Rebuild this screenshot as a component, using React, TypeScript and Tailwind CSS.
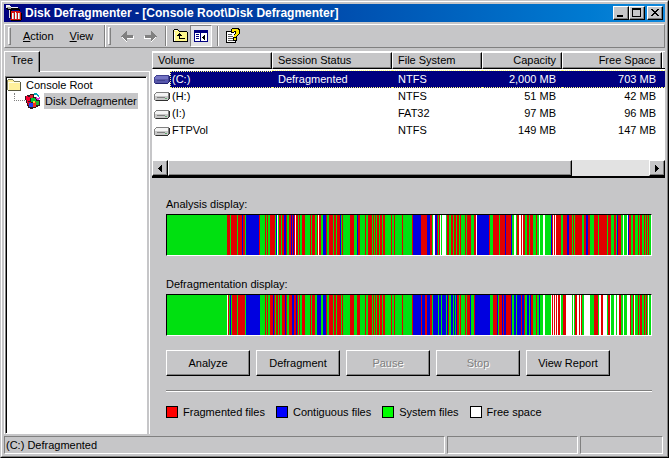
import type { ReactNode } from "react";

const ANALYSIS = [
  "60G 3R 1G 6R 1G 4R 1B 2R 1G 13B 1R 5G 1R 1G 1R 2G 5R 1G 1B 1W 1G 2R 1G 2R 2B 1R 2G 2R 1B 1R 1B 1R 1W 2R 1G 1R 2G 3R 5G 1R 1G 3R 2G 1R 1W 2R 2G 3B",
  "1R 2G 4R 1G 2R 1G 3R 1B 1G 1R 7G 4R 3G 1B 2R 5G 1R 2G 4R 1G 1R 1G 1R 1G 2R 1G 2R 1G 2R 6G 1R 2G 1R 7G 1R 9G 1R 8B 6R 3B 2R 1G 2W 2B 1R 1G 1R 1W 1G 4W 1G 2R 2G 2R 1G 2R 1G 2R 1G 1R 4G 1R 1G 4R 3G 2R 1W 12B 1R 3G",
  "6R 1G 5R 1B 5R 1B 2G 2W 1G 2R 2W 1R 1W 2R 2G 2R 1G 3R 3G 1R 2G 1W 3G 2W 6G 1B 1R 1W 1R 1W 5R 2G 4R 2B 3R 1G 1R 1G 7R 2G 2R 2B 2R 4G 4R 1G 8R 1G 3R 3G 2R 1G 1B 3R 2G 1W 3G 1W 1B 2R 2G 2R 3G 1R 1G 2R 2G 1R 1G 1R 1G 1R 2G",
].join(" ");

const DEFRAG = [
  "60G 1W 1R 1G 1B 1G 5R 1G 7R 1G 14B 5G 1R 1G 1R 2G 3R 1B 1R 1G 2R 1G 1R 2G 3R 1B 1R 2G 3R 2B 2R 1B 1R 1G 1R 2G 3R 5G 1R 1G 3R 2G 4B 2G 3B",
  "1R 2G 4R 1G 2R 1G 4R 1G 1R 7G 4R 3G 3R 5G 1R 2G 4R 1G 1R 1G 1R 1G 2R 1G 2R 1G 2R 6G 1R 2G 1R 7G 1R 9G 1R 8B 1R 3B 2R 3B 2R 1G 5B 1G 2B 1G 4B 1G 1B 1R 2G 2B 1G 1B 1G 1B 2R 1G 1R 4G 1R 1G 3R 1B 3G 1R 15B 3G",
  "4R 1B 1G 3R 1B 1R 2B 5R 1B 2G 2B 1G 4B 1R 2B 1R 2G 2B 1G 1B 2R 3G 1R 2G 1B 3G 2W 6G 1W 1R 1W 1R 1W 1R 1W 2R 1W 2G 3R 6W 1G 1W 1G 2R 2W 1R 1W 1R 2G 6W 4G 4R 1G 2W 2R 4W 1G 2R 1W 3G 2W 1G 2W 2R 2G 1W 3G 3W 1R 2G 1R 1W 3G 1R 1G 2R 2G 1R 1G 1R 1G 1W 2G",
].join(" ");

const COLORS: Record<string, string> = { G: "#00e010", R: "#e00000", B: "#0000e0", W: "#ffffff" };

const VOLUMES = [
  { name: "(C:)", status: "Defragmented", fs: "NTFS", capacity: "2,000 MB", free: "703 MB" },
  { name: "(H:)", status: "", fs: "NTFS", capacity: "51 MB", free: "42 MB" },
  { name: "(I:)", status: "", fs: "FAT32", capacity: "97 MB", free: "96 MB" },
  { name: "FTPVol", status: "", fs: "NTFS", capacity: "149 MB", free: "147 MB" },
];

const raised =
  "border border-t-white border-l-white border-r-black border-b-black shadow-[inset_-1px_-1px_0_#808080]";

function DiskMap({ label, data }: { label: string; data: string }) {
  let x = 0;
  const bands = data.split(" ").map((run) => {
    const width = parseInt(run, 10);
    const band = { x, width, color: COLORS[run.slice(-1)] };
    x += width;
    return band;
  });
  return (
    <section>
      <h2 className="h-4 leading-4">{label}</h2>
      <div className="mt-0.5 h-[42px] border border-t-black border-r-white border-b-white border-l-black">
        <svg
          role="img"
          aria-label={label}
          className="block h-full w-full"
          viewBox={`0 0 ${x} 40`}
          preserveAspectRatio="none"
          shapeRendering="crispEdges"
        >
          {bands.map((b) => (
            <rect key={b.x} x={b.x} y="0" width={b.width} height="40" fill={b.color} />
          ))}
        </svg>
      </div>
    </section>
  );
}

function HammerIcon() {
  return (
    <svg className="h-4 w-4" viewBox="0 0 16 16" shapeRendering="crispEdges" aria-hidden="true">
      <path d="M0 1h4v1h2v1h7v1h1v2h-1V5H6v1H5v6H3V5H1V4H0z" fill="#000" />
      <path d="M0 0h4v1h1v1H2v1H0zM5 2h7v1H5z" fill="#f0f0f0" />
      <path d="M1 2h4v2H2V3H1z" fill="#a0a0a0" />
      <path d="M3 5h1v8H3z" fill="#d8d8d8" />
      <path d="M5 6h9v1h1v8H4v-1h1z" fill="#d01010" />
      <path d="M6 8h1v6H6zM9 7h1v7H9zM12 8h1v6h-1z" fill="#fff" />
      <path d="M7 8h1v6H7zM10 8h1v6h-1zM13 8h1v6h-1z" fill="#c0c0c0" />
      <path d="M15 8h1v7h-1zM5 15h10v1H5z" fill="#000" />
    </svg>
  );
}

function FolderIcon() {
  return (
    <svg className="h-4 w-4" viewBox="0 0 16 16" shapeRendering="crispEdges" aria-hidden="true">
      <path d="M2 2h5v1h1v1h6v1h1v8h-1v1H2v-1H1V3h1z" fill="#808060" />
      <path d="M2 3h5v1h1v1h6v8H2z" fill="#fff09c" />
      <path d="M2 5h12v1H3v7H2z" fill="#fffde8" />
      <path d="M14 5h1v9H2v-1h12z" fill="#585840" />
    </svg>
  );
}

function DefragIcon() {
  return (
    <svg className="h-4 w-4" viewBox="0 0 16 16" shapeRendering="crispEdges" aria-hidden="true">
      <path d="M0 3h2V2h3V1h4v3h2v2h3v1h1v6h-2v1h-2v1H8v1H5v-1H3v-2H2v-3H1V7H0z" fill="#301820" />
      <path d="M1 3h2v1h2v4H3v2H2V7H1z" fill="#f80030" />
      <path d="M5 2h3v3H5z" fill="#e02030" />
      <path d="M6 5h4v1h1v3H6z" fill="#00c830" />
      <path d="M3 9h3v3H3z" fill="#e00028" />
      <path d="M4 10h4v4H4z" fill="#2040f0" />
      <path d="M8 9h3v5H8z" fill="#f03020" />
      <path d="M11 8h3v4h-3z" fill="#20b830" />
      <path d="M8 8h2v2H8z" fill="#ffd820" />
      <path d="M9 0h3v1h1v1h1v2h-1V3h-1V2H9z" fill="#00a8b8" />
      <path d="M11 4h1v1h2V4h1v2h-1v1h-2V6h-1z" fill="#d838c8" />
    </svg>
  );
}

function DriveIcon({ selected }: { selected: boolean }) {
  const [top, face, edge] = selected ? ["#7474c4", "#5858a8", "#404090"] : ["#f4f4f4", "#c8c8c8", "#808080"];
  return (
    <svg className="h-4 w-4 shrink-0" viewBox="0 0 16 16" shapeRendering="crispEdges" aria-hidden="true">
      <path d="M2 4h13v1h1v6h-1v1h-1v1H1v-1H0V6h1V5h1z" fill={edge} />
      <path d="M3 5h11v1H2v1H1V6h1V5z" fill={top} />
      <path d="M1 7h13v5H1z" fill={face} />
      <path d="M2 6h12v2H1V7h1z" fill={top} />
      <path d="M3 9h8v1H3z" fill={edge} />
      <path d="M11 10h2v1h-2z" fill={selected ? "#5050c0" : "#60a870"} />
      <path d="M15 5h1v6h-1v1h-1v1H2v-1h12v-1h1z" fill={selected ? "#202070" : "#303030"} />
    </svg>
  );
}

function ArrowIcon({ back }: { back?: boolean }) {
  return (
    <svg className="h-4 w-4" viewBox="0 0 16 16" shapeRendering="crispEdges" aria-hidden="true">
      <g transform={back ? undefined : "matrix(-1 0 0 1 16 0)"}>
        <path d="M3 9h1v1h1v1h1v1h1v-2h7V8h1v3H8v3H7v-1H6v-1H5v-1H4v-1H3z" fill="#fff" />
        <path d="M2 8h1V7h1V6h1V5h1V4h1V3h1v4h6v3H8v3H7v-1H6v-1H5v-1H4V9H2z" fill="#808080" />
      </g>
    </svg>
  );
}

function UpFolderIcon() {
  return (
    <svg className="h-4 w-4" viewBox="0 0 16 16" shapeRendering="crispEdges" aria-hidden="true">
      <path d="M2 1h4v1h1v1h8v1h1v10H1V2h1z" fill="#000" />
      <path d="M2 2h4v1h1v1h8v9H2z" fill="#fff88c" />
      <path d="M2 4h1v9H2zM3 2h2v1H3z" fill="#fff" />
      <path d="M7 5h1v1h1v1h1v1H8v2h5v1H7V8H5V7h1V6h1z" fill="#000" />
    </svg>
  );
}

function ConsoleTreeIcon() {
  return (
    <svg className="h-4 w-4" viewBox="0 0 16 16" shapeRendering="crispEdges" aria-hidden="true">
      <path d="M1 2h14v12H1z" fill="#000080" />
      <path d="M2 5h5v8H2zM8 5h6v8H8z" fill="#fff" />
      <path d="M3 6h3v1H3zM3 8h3v1H3zM3 10h3v1H3z" fill="#000080" />
      <path d="M9 9h1V8h1V7h1v5h-1v-1h-1v-1H9z" fill="#000" />
    </svg>
  );
}

function HelpIcon() {
  return (
    <svg className="h-4 w-4" viewBox="0 0 16 16" shapeRendering="crispEdges" aria-hidden="true">
      <path d="M1 3h8v11h2v1H1z" fill="#000" />
      <path d="M2 4h8v10H2z" fill="#fff" />
      <path d="M10 11h1v4h-1z" fill="#000" />
      <path d="M3 6h4v1H3zM3 8h5v1H3zM3 10h5v1H3zM3 12h5v1H3z" fill="#606060" />
      <path d="M6 1h1V0h7v1h1v5h-1v1h-1v1h-1v5H8V9h1V6h1V4H9v1H6z" fill="#000" />
      <path d="M7 1h6v1h1v4h-1v1h-1v1h-1v1H9V7h1V6h1V3H9v1H7zM9 10h2v2H9z" fill="#ffe800" />
    </svg>
  );
}

function CaptionButton({ label, children }: { label: string; children: ReactNode }) {
  return (
    <button aria-label={label} className={`h-3.5 w-4 bg-[#c6c6c8] ${raised}`}>
      <svg className="h-3 w-3.5" viewBox="0 0 14 12" shapeRendering="crispEdges" aria-hidden="true">
        {children}
      </svg>
    </button>
  );
}

function Grip() {
  return <span className="h-[18px] w-[3px] border border-t-white border-r-[#808080] border-b-[#808080] border-l-white" />;
}

function Divider() {
  return <span className="h-5 w-0.5 border-l border-r border-l-[#808080] border-r-white" />;
}

function ScrollButton({ left }: { left?: boolean }) {
  return (
    <button
      aria-label={left ? "Scroll left" : "Scroll right"}
      className={`flex h-4 w-4 items-center justify-center bg-[#c6c6c8] ${raised}`}
    >
      <svg className="h-[7px] w-1" viewBox="0 0 4 7" shapeRendering="crispEdges" aria-hidden="true">
        <path d={left ? "M3 0h1v7H3V6H2V5H1V4H0V3h1V2h1V1h1z" : "M0 0h1v1h1v1h1v1h1v1H3v1H2v1H1v1H0z"} />
      </svg>
    </button>
  );
}

function ActionButton({ children, disabled }: { children: string; disabled?: boolean }) {
  return (
    <button
      disabled={disabled}
      className={`h-[26px] w-[84px] disabled:text-[#808080] disabled:[text-shadow:1px_1px_0_white] ${raised}`}
    >
      {children}
    </button>
  );
}

function LegendItem({ swatch, children }: { swatch: string; children: string }) {
  return (
    <li className="flex items-center gap-[5px]">
      <span className={`h-3 w-3 border border-black ${swatch}`} />
      {children}
    </li>
  );
}

function HeaderCell({ children, right }: { children?: string; right?: boolean }) {
  return (
    <th className="p-0 font-normal">
      <div
        className={`h-[17px] overflow-hidden border border-t-white border-l-white border-r-black border-b-black px-[5px] leading-[15px] shadow-[inset_-1px_-1px_0_#808080] ${right ? "text-right" : "text-left"}`}
      >
        {children}
      </div>
    </th>
  );
}

function StatusPanel({ className, children }: { className: string; children?: string }) {
  return (
    <div
      className={`h-[18px] border border-t-[#808080] border-l-[#808080] border-r-white border-b-white leading-4 ${className}`}
    >
      {children}
    </div>
  );
}

export default function App() {
  return (
    <div className="flex min-h-screen flex-col border border-t-[#c6c6c8] border-r-black border-b-black border-l-[#c6c6c8] bg-[#c6c6c8] font-['Liberation_Sans',Arial,sans-serif] text-[11px] text-black">
      <div className="flex flex-1 flex-col border border-t-white border-r-[#808080] border-b-[#808080] border-l-white p-0.5">
        <header className="flex h-[18px] items-center bg-linear-to-r from-[#000080] to-[#1088dc] px-0.5">
          <HammerIcon />
          <h1 className="ml-[3px] flex-1 truncate text-xs font-bold text-white">
            Disk Defragmenter - [Console Root\Disk Defragmenter]
          </h1>
          <div className="flex">
            <CaptionButton label="Minimize">
              <path d="M3 8h6v2H3z" />
            </CaptionButton>
            <CaptionButton label="Maximize">
              <path d="M2 1h9v9H2zM3 3v6h7V3z" fillRule="evenodd" />
            </CaptionButton>
            <span className="w-0.5" />
            <CaptionButton label="Close">
              <path d="M3 2h2v1h1v1h2V3h1V2h2v1h-1v1H9v1H8v1h1v1h1v1h1v1H9V8H8V7H6v1H5v1H3V8h1V7h1V6h1V5H5V4H4V3H3z" />
            </CaptionButton>
          </div>
        </header>

        <div className="mt-0.5 flex h-6 border border-t-white border-r-[#808080] border-b-[#808080] border-l-white">
          <nav className="flex w-[100px] items-center border-r border-[#808080] pl-[3px]" aria-label="Menu bar">
            <Grip />
            <button className="ml-3">
              <span className="underline">A</span>ction
            </button>
            <button className="ml-4">
              <span className="underline">V</span>iew
            </button>
          </nav>
          <div className="flex flex-1 items-center border-l border-white pl-0.5" role="toolbar" aria-label="Standard">
            <Grip />
            <button aria-label="Back" disabled className="ml-2">
              <ArrowIcon back />
            </button>
            <button aria-label="Forward" disabled className="mr-1.5 ml-2">
              <ArrowIcon />
            </button>
            <Divider />
            <button aria-label="Up one level" className="mr-0.5 ml-[5px]">
              <UpFolderIcon />
            </button>
            <button
              aria-label="Show or hide console tree"
              aria-pressed="true"
              className="mr-[5px] flex h-[22px] w-[22px] items-center justify-center border border-t-[#808080] border-r-white border-b-white border-l-[#808080] bg-[#e2e2e4]"
            >
              <ConsoleTreeIcon />
            </button>
            <Divider />
            <button aria-label="Help" className="ml-1.5">
              <HelpIcon />
            </button>
          </div>
        </div>

        <main className="mt-[3px] flex flex-1">
          <aside className="flex w-[146px] shrink-0 flex-col">
            <div className="flex">
              <button
                role="tab"
                aria-selected="true"
                className="h-[21px] w-9 border-t border-r border-l border-t-white border-r-black border-l-white pb-1 shadow-[inset_-1px_0_0_#808080]"
              >
                Tree
              </button>
              <span className="flex-1 border-b border-white" />
            </div>
            <div className="flex flex-1 flex-col border-r border-l border-r-white border-l-white pt-1 pr-0.5">
              <ul className="flex-1 border border-t-[#808080] border-r-white border-b-white border-l-[#808080] bg-white shadow-[inset_1px_1px_0_#000]">
                <li>
                  <span className="flex h-4 items-center gap-1">
                    <FolderIcon />
                    <span>Console Root</span>
                  </span>
                  <ul>
                    <li className="flex h-4 items-center pl-2">
                      <span className="h-2 w-[11px] self-start border-b border-l border-dotted border-[#808080]" />
                      <DefragIcon />
                      <span className="ml-[3px] bg-[#c6c6c8] px-px leading-4">Disk Defragmenter</span>
                    </li>
                  </ul>
                </li>
              </ul>
            </div>
          </aside>

          <div className="ml-0.5 flex min-w-0 flex-1 flex-col">
            <div className="flex h-[127px] flex-col border-b-2 border-black bg-white">
              <table className="w-full table-fixed border-collapse">
                <colgroup>
                  <col className="w-[120px]" />
                  <col className="w-[120px]" />
                  <col className="w-[90px]" />
                  <col className="w-20" />
                  <col className="w-[100px]" />
                  <col />
                </colgroup>
                <thead className="bg-[#c6c6c8]">
                  <tr>
                    <HeaderCell>Volume</HeaderCell>
                    <HeaderCell>Session Status</HeaderCell>
                    <HeaderCell>File System</HeaderCell>
                    <HeaderCell right>Capacity</HeaderCell>
                    <HeaderCell right>Free Space</HeaderCell>
                    <td className="border-t border-l border-b border-t-white border-b-black border-l-white p-0" />
                  </tr>
                  <tr className="h-0.5 bg-white">
                    <td colSpan={6} className="p-0" />
                  </tr>
                </thead>
                <tbody>
                  {VOLUMES.map((v, i) => {
                    const sel = i === 0;
                    const cell = sel
                      ? "h-[17px] border-t border-b border-dotted border-[#ffff7f] bg-[#000080] p-0 px-1.5 leading-[15px] text-white"
                      : "h-[17px] p-0 px-1.5 leading-[17px]";
                    return (
                      <tr key={v.name}>
                        <td className="p-0">
                          <div className="flex h-[17px] items-center pl-0.5">
                            <DriveIcon selected={sel} />
                            <span
                              className={
                                sel
                                  ? "h-[17px] flex-1 border-t border-b border-l border-dotted border-[#ffff7f] bg-[#000080] pl-px leading-[15px] text-white"
                                  : "flex-1 pl-0.5"
                              }
                            >
                              {v.name}
                            </span>
                          </div>
                        </td>
                        <td className={cell}>{v.status}</td>
                        <td className={cell}>{v.fs}</td>
                        <td className={`${cell} text-right`}>{v.capacity}</td>
                        <td className={`${cell} text-right`}>{v.free}</td>
                        <td className={cell} />
                      </tr>
                    );
                  })}
                </tbody>
              </table>
              <div className="mt-auto flex h-4 bg-[#e2e2e2]">
                <ScrollButton left />
                <div className="flex flex-1">
                  <div className={`w-[84%] bg-[#c6c6c8] ${raised}`} />
                </div>
                <ScrollButton />
              </div>
            </div>

            <div className="flex flex-1 flex-col pt-[18px] pr-[13px] pl-3.5">
              <DiskMap label="Analysis display:" data={ANALYSIS} />
              <div className="h-5" />
              <DiskMap label="Defragmentation display:" data={DEFRAG} />
              <div className="mt-3.5 flex gap-1.5">
                <ActionButton>Analyze</ActionButton>
                <ActionButton>Defragment</ActionButton>
                <ActionButton disabled>Pause</ActionButton>
                <ActionButton disabled>Stop</ActionButton>
                <ActionButton>View Report</ActionButton>
              </div>
              <hr className="mt-3.5 h-0.5 border-t border-b border-t-[#808080] border-b-white" />
              <ul className="mt-3 flex gap-[11px]">
                <LegendItem swatch="bg-[#ff0000]">Fragmented files</LegendItem>
                <LegendItem swatch="bg-[#0000ff]">Contiguous files</LegendItem>
                <LegendItem swatch="bg-[#00ff00]">System files</LegendItem>
                <LegendItem swatch="bg-white">Free space</LegendItem>
              </ul>
            </div>
          </div>
        </main>

        <footer className="mt-0.5 flex gap-0.5 pr-0.5">
          <StatusPanel className="flex-1 pl-px">(C:) Defragmented</StatusPanel>
          <StatusPanel className="w-[131px]" />
          <StatusPanel className="w-[83px]" />
        </footer>
      </div>
    </div>
  );
}
